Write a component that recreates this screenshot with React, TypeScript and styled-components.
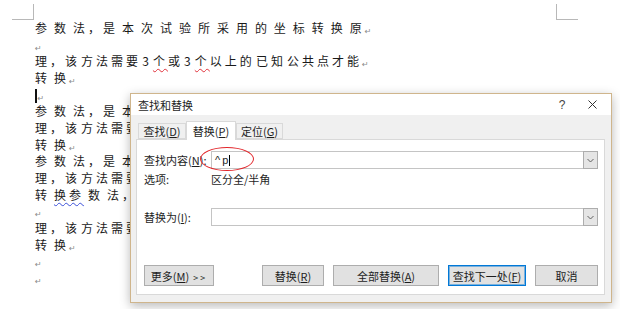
import React from 'react';
import styled, { createGlobalStyle } from 'styled-components';

const GlobalStyle = createGlobalStyle`
  html, body {
    margin: 0;
    padding: 0;
    background: #ffffff;
  }
  body {
    font-family: 'Noto Sans CJK SC', 'Noto Sans', sans-serif;
  }
`;

const Page = styled.div`
  position: relative;
  width: 620px;
  height: 309px;
  overflow: hidden;
  background: #ffffff;
`;

const CornerRow = styled.div`
  display: flex;
  justify-content: space-between;
  height: 20px;
  padding: 4px 42px 0 12px;
  box-sizing: border-box;
`;

const CornerMark = styled.div<{ $side: 'left' | 'right' }>`
  width: 22px;
  height: 16px;
  box-sizing: border-box;
  border-bottom: 1px solid #b8b8b8;
  ${(p) => (p.$side === 'left' ? 'border-right: 1px solid #b8b8b8;' : 'border-left: 1px solid #b8b8b8;')}
`;

const Doc = styled.div`
  padding-left: 35px;
`;

const Line = styled.div<{ $tight?: boolean }>`
  height: 16.67px;
  line-height: 16.67px;
  font-size: 12px;
  letter-spacing: 3px;
  word-spacing: ${(p) => (p.$tight ? '-4.6px' : '-1.7px')};
  color: #1a1a1a;
  white-space: nowrap;
`;

const Mark = styled.span`
  font-family: 'DejaVu Sans', sans-serif;
  font-size: 8px;
  letter-spacing: 0;
  color: #8a8a8a;
  vertical-align: -1px;
`;

const Wavy = styled.span<{ $color: string }>`
  text-decoration: underline wavy ${(p) => p.$color};
  text-decoration-thickness: 1px;
  text-underline-offset: 2px;
`;

const Caret = styled.span`
  display: inline-block;
  width: 1.5px;
  height: 14px;
  background: #111111;
  vertical-align: middle;
  margin-right: 1px;
`;

/* dialog */

const Dialog = styled.div`
  position: absolute;
  left: 130px;
  top: 93px;
  width: 482px;
  height: 210px;
  box-sizing: border-box;
  border: 1px solid #cfb58c;
  background: #f0f0f0;
  box-shadow: 0 3px 10px rgba(0, 0, 0, 0.28);
  display: flex;
  flex-direction: column;
  font-family: 'Noto Sans CJK SC', 'Noto Sans', sans-serif;
  font-size: 11px;
  color: #1e1e1e;
`;

const TitleBar = styled.div`
  height: 21px;
  background: #ffffff;
  display: flex;
  align-items: center;
  padding: 0 4px 0 7px;
`;

const Title = styled.div`
  flex: 1;
`;

const TitleButton = styled.div`
  width: 30px;
  height: 21px;
  display: flex;
  align-items: center;
  justify-content: center;
  color: #444444;
  font-size: 12px;
  font-family: 'Liberation Sans', sans-serif;
`;

const Body = styled.div`
  flex: 1;
  display: flex;
  flex-direction: column;
  padding: 0 6px 7px 5px;
`;

const TabStrip = styled.div`
  position: relative;
  z-index: 1;
  height: 24px;
  display: flex;
  align-items: flex-end;
  padding-left: 2px;
`;

const Tab = styled.div<{ $active?: boolean; $w: number }>`
  width: ${(p) => p.$w}px;
  height: ${(p) => (p.$active ? 19 : 16)}px;
  margin-bottom: ${(p) => (p.$active ? -1 : 0)}px;
  box-sizing: border-box;
  border: 1px solid #d9d9d9;
  border-bottom: ${(p) => (p.$active ? 'none' : '1px solid #d9d9d9')};
  background: ${(p) => (p.$active ? '#ffffff' : '#f0f0f0')};
  display: flex;
  align-items: center;
  justify-content: center;
  padding-bottom: ${(p) => (p.$active ? 1 : 0)}px;
`;

const Panel = styled.div`
  height: 156px;
  box-sizing: border-box;
  border: 1px solid #d9d9d9;
  background: #ffffff;
  padding: 11px 6px 8px 7px;
  display: flex;
  flex-direction: column;
`;

const FieldRow = styled.div<{ $gap?: number }>`
  position: relative;
  display: flex;
  align-items: center;
  height: 18px;
  margin-top: ${(p) => p.$gap || 0}px;
`;

const Label = styled.div`
  width: 67px;
  flex-shrink: 0;
`;

const Combo = styled.div`
  flex: 1;
  height: 18px;
  box-sizing: border-box;
  border: 1px solid #c4c4c4;
  background: #ffffff;
  display: flex;
`;

const ComboText = styled.div`
  flex: 1;
  padding-left: 3px;
  display: flex;
  align-items: center;
  font-family: 'Liberation Sans', sans-serif;
  font-size: 11px;
  letter-spacing: 2px;
`;

const TextCaret = styled.span`
  display: inline-block;
  width: 1px;
  height: 11px;
  background: #000000;
  margin-left: -1px;
`;

const DropButton = styled.div`
  width: 15px;
  margin: -1px -1px -1px 0;
  box-sizing: border-box;
  border: 1px solid #adadad;
  background: #e5e5e5;
  display: flex;
  align-items: center;
  justify-content: center;
`;

const Ellipse = styled.div`
  position: absolute;
  left: 56px;
  top: -4px;
  width: 54px;
  height: 24px;
  box-sizing: border-box;
  border: 1.5px solid #e2262b;
  border-radius: 50%;
  pointer-events: none;
`;

const OptionsRow = styled.div`
  display: flex;
  align-items: center;
  height: 14px;
  margin-top: 3px;
`;

const ButtonRow = styled.div`
  margin-top: auto;
  display: flex;
  justify-content: space-between;
`;

const ButtonGroup = styled.div`
  display: flex;
  gap: 9px;
`;

const Button = styled.button<{ $w: number; $primary?: boolean }>`
  width: ${(p) => p.$w}px;
  height: 21px;
  padding: 0;
  box-sizing: border-box;
  border: 1px solid ${(p) => (p.$primary ? '#0078d7' : '#adadad')};
  box-shadow: ${(p) => (p.$primary ? 'inset 0 0 0 1px rgba(0, 120, 215, 0.45)' : 'none')};
  background: #e1e1e1;
  font-family: 'Noto Sans CJK SC', 'Noto Sans', sans-serif;
  font-size: 11px;
  color: #1e1e1e;
  cursor: pointer;
`;

const Arrows = styled.span`
  letter-spacing: 2px;
  margin-left: 4px;
  font-size: 9px;
`;

const Chevron = () => (
  <svg width="7" height="5" viewBox="0 0 7 5">
    <polyline points="0.5,1 3.5,4 6.5,1" fill="none" stroke="#606060" strokeWidth="1" />
  </svg>
);

const CloseIcon = () => (
  <svg width="9" height="9" viewBox="0 0 9 9">
    <path d="M0.5 0.5 L8.5 8.5 M8.5 0.5 L0.5 8.5" stroke="#333333" strokeWidth="1" />
  </svg>
);

const line1 = '参 数 法，是 本 次 试 验 所 采 用 的 坐 标 转 换 原';
const line3 = '理，该 方法需要 3 个或 3 个以上的 已知 公共点才能';

const App: React.FC = () => {
  return (
    <Page>
      <GlobalStyle />
      <CornerRow>
        <CornerMark $side="left" />
        <CornerMark $side="right" />
      </CornerRow>
      <Doc>
        <Line>{line1}<Mark>↵</Mark></Line>
        <Line><Mark>↵</Mark></Line>
        <Line $tight>
          理，该 方法需要 3 <Wavy $color="#e0303a">个</Wavy>或 3 <Wavy $color="#e0303a">个</Wavy>以上的 已知 公共点才能<Mark>↵</Mark>
        </Line>
        <Line>转 换<Mark>↵</Mark></Line>
        <Line><Caret /><Mark>↵</Mark></Line>
        <Line>{line1}<Mark>↵</Mark></Line>
        <Line $tight>{line3}<Mark>↵</Mark></Line>
        <Line>转 换<Mark>↵</Mark></Line>
        <Line>{line1}<Mark>↵</Mark></Line>
        <Line $tight>{line3}<Mark>↵</Mark></Line>
        <Line>
          转 <Wavy $color="#3b4fd8">换参</Wavy> 数 法，是 本 次 试 验 所 采 用 的 坐 标 转 换 原<Mark>↵</Mark>
        </Line>
        <Line><Mark>↵</Mark></Line>
        <Line $tight>{line3}<Mark>↵</Mark></Line>
        <Line>转 换<Mark>↵</Mark></Line>
        <Line><Mark>↵</Mark></Line>
        <Line><Mark>↵</Mark></Line>
      </Doc>

      <Dialog>
        <TitleBar>
          <Title>查找和替换</Title>
          <TitleButton>?</TitleButton>
          <TitleButton><CloseIcon /></TitleButton>
        </TitleBar>
        <Body>
          <TabStrip>
            <Tab $w={48}>查找(<u>D</u>)</Tab>
            <Tab $w={50} $active>替换(<u>P</u>)</Tab>
            <Tab $w={47}>定位(<u>G</u>)</Tab>
          </TabStrip>
          <Panel>
            <FieldRow>
              <Label>查找内容(<u>N</u>):</Label>
              <Combo>
                <ComboText>^p<TextCaret /></ComboText>
                <DropButton><Chevron /></DropButton>
              </Combo>
              <Ellipse />
            </FieldRow>
            <OptionsRow>
              <Label>选项:</Label>
              <div>区分全/半角</div>
            </OptionsRow>
            <FieldRow $gap={22}>
              <Label>替换为(<u>I</u>):</Label>
              <Combo>
                <ComboText />
                <DropButton><Chevron /></DropButton>
              </Combo>
            </FieldRow>
            <ButtonRow>
              <Button $w={70}>更多(<u>M</u>)<Arrows>&gt;&gt;</Arrows></Button>
              <ButtonGroup>
                <Button $w={62}>替换(<u>R</u>)</Button>
                <Button $w={106}>全部替换(<u>A</u>)</Button>
                <Button $w={78} $primary>查找下一处(<u>F</u>)</Button>
                <Button $w={63}>取消</Button>
              </ButtonGroup>
            </ButtonRow>
          </Panel>
        </Body>
      </Dialog>
    </Page>
  );
};

export default App;
